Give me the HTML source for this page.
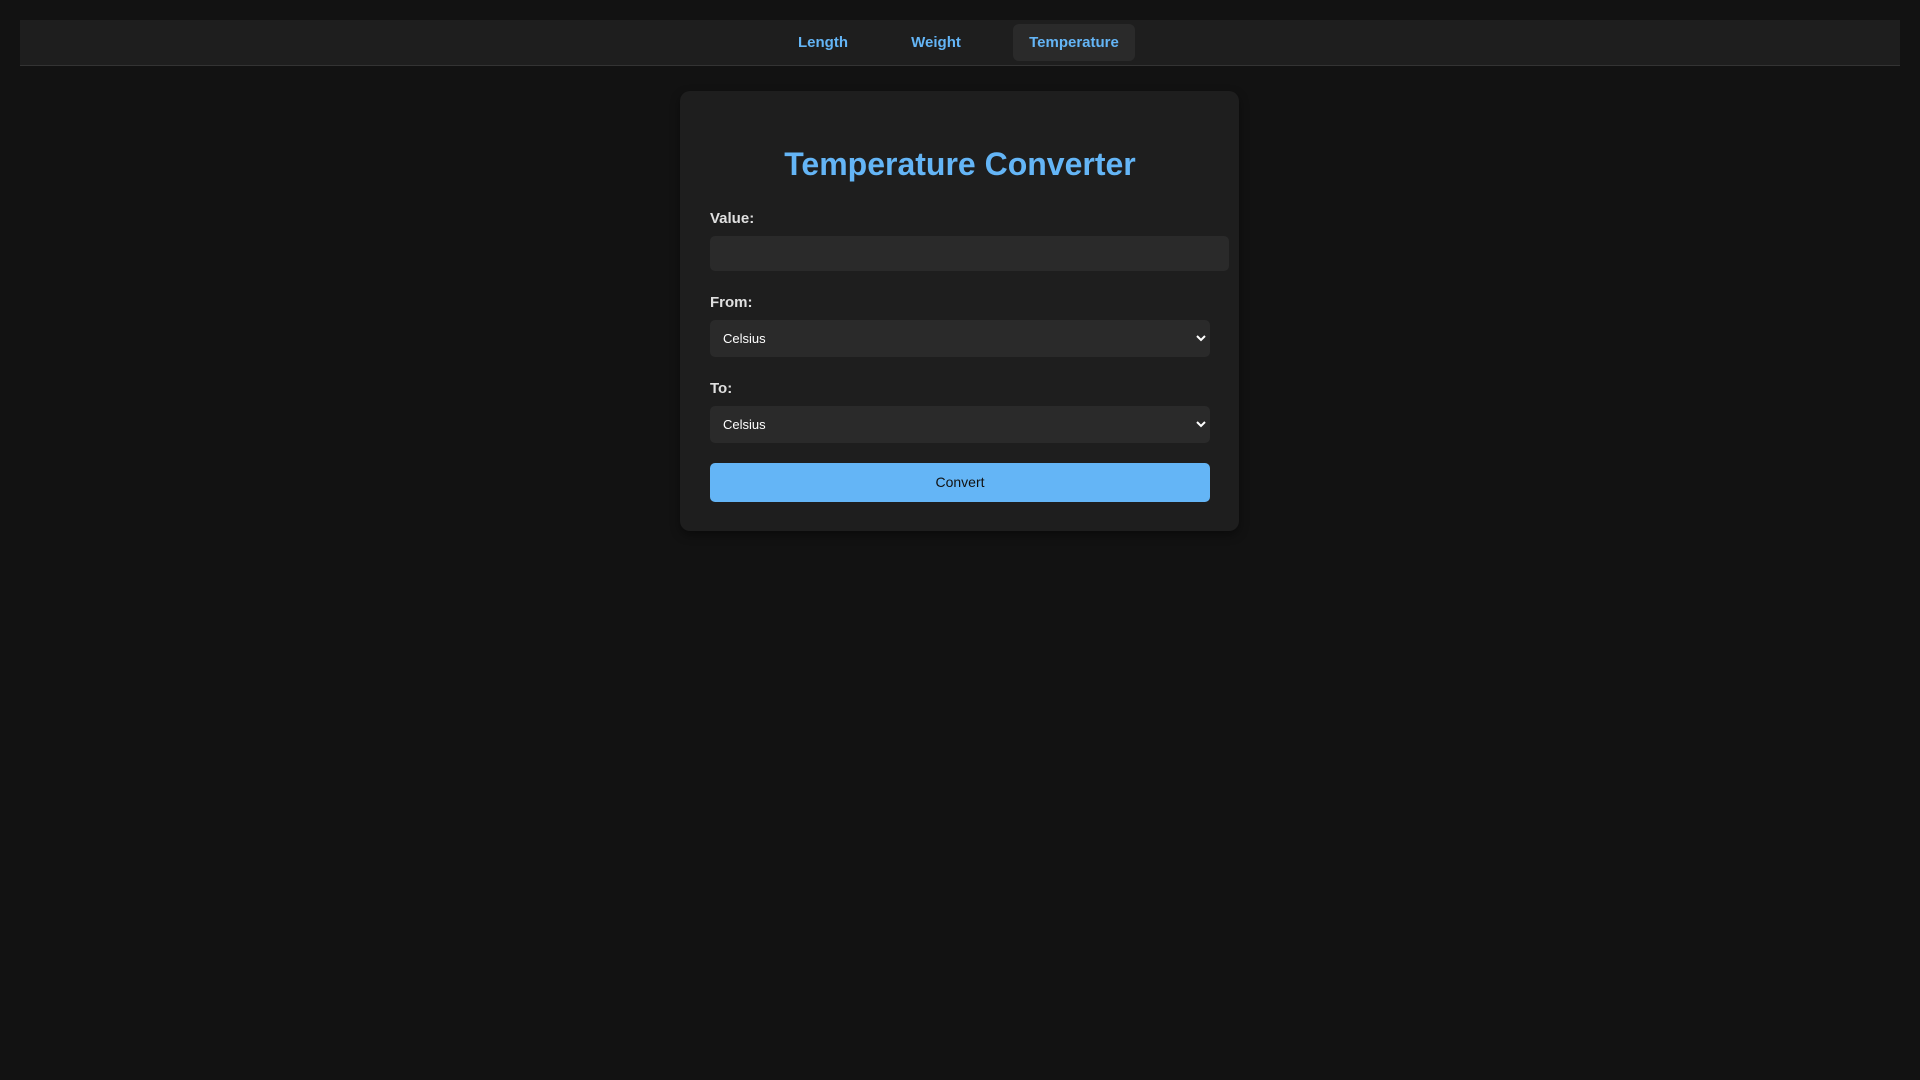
<!DOCTYPE html>
<html><head><style>
body{margin:0;background:#121212;width:1920px;height:1080px;font-family:"Liberation Sans",sans-serif;position:relative;overflow:hidden}
.nav{position:absolute;left:20px;top:20px;width:1880px;height:45px;background:#1e1e1e;border-bottom:1px solid #333}
.tab{position:absolute;top:4px;height:37px;line-height:37px;color:#64b5f6;font-weight:bold;font-size:15px;border-radius:6px;text-align:center}
.card{position:absolute;left:680px;top:91px;width:559px;height:440px;background:#1e1e1e;border-radius:10px;box-shadow:0 4px 10px rgba(0,0,0,.4)}
h1{position:absolute;left:0;width:1920px;top:146px;margin:0;text-align:center;color:#64b5f6;font-size:32px;font-weight:bold}
.lbl{position:absolute;left:710px;color:#e0e0e0;font-weight:bold;font-size:15px}
.box{position:absolute;left:710px;background:#2a2a2a;border-radius:5px}
.sel{color:#fff;font-size:13px;line-height:37px;padding-left:13px;box-sizing:border-box}
.sel svg{position:absolute;right:4px;top:15px}
.btn{position:absolute;left:710px;top:463px;width:500px;height:39px;background:#64b5f6;border-radius:5px;text-align:center;line-height:39px;font-size:14px;color:#111}
</style></head><body>
<div class="nav">
<div class="tab" style="left:778px;width:46px">Length</div>
<div class="tab" style="left:888px;width:56px">Weight</div>
<div class="tab" style="left:993px;width:122px;background:#2a2a2a">Temperature</div>
</div>
<div class="card"></div>
<h1>Temperature Converter</h1>
<div class="lbl" style="top:210px">Value:</div>
<div class="box" style="top:236px;width:519px;height:35px"></div>
<div class="lbl" style="top:294px">From:</div>
<div class="box sel" style="top:320px;width:500px;height:37px">Celsius<svg width="10" height="7" viewBox="0 0 10 7"><path d="M1 1l4 4 4-4" stroke="#fff" stroke-width="2" fill="none"/></svg></div>
<div class="lbl" style="top:380px">To:</div>
<div class="box sel" style="top:406px;width:500px;height:37px">Celsius<svg width="10" height="7" viewBox="0 0 10 7"><path d="M1 1l4 4 4-4" stroke="#fff" stroke-width="2" fill="none"/></svg></div>
<div class="btn">Convert</div>
</body></html>
